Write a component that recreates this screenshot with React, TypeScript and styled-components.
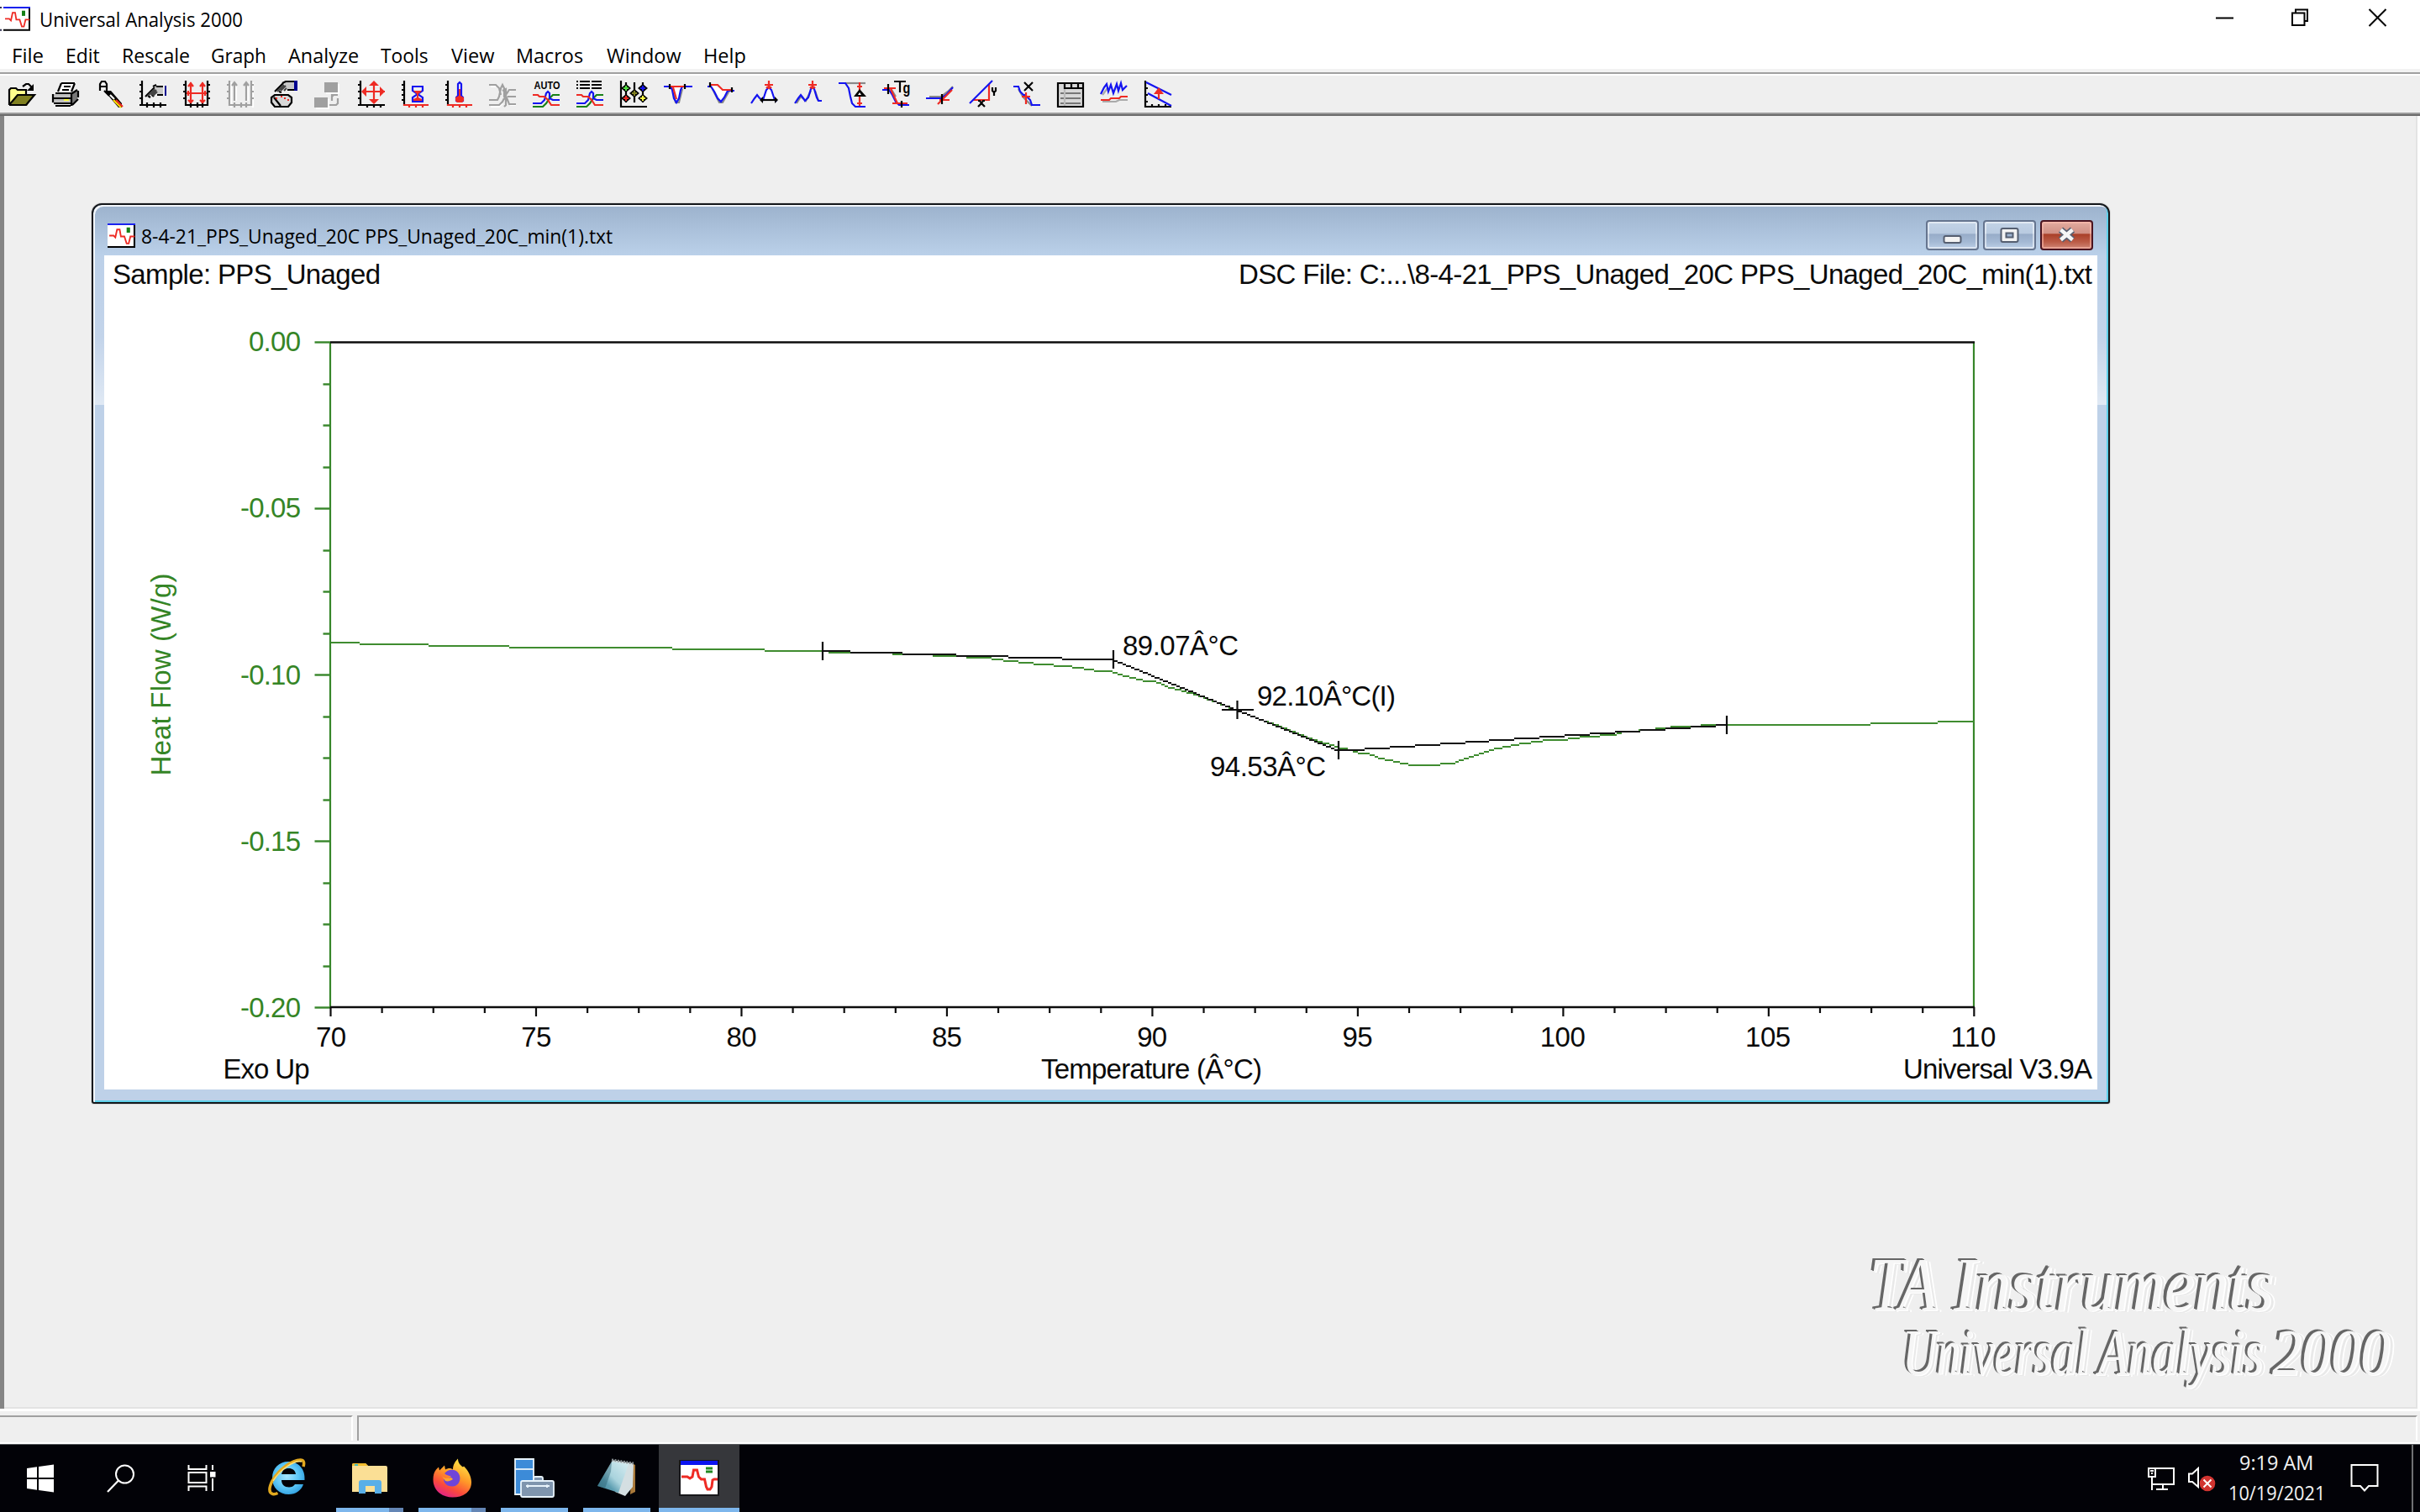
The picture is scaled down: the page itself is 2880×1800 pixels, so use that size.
import React, { useLayoutEffect, useRef, useState } from 'react';
import styled, { createGlobalStyle } from 'styled-components';

const GlobalStyle = createGlobalStyle`
  * { box-sizing: border-box; }
  html, body { margin: 0; padding: 0; background: #efefef; overflow: hidden; }
`;

const UI_FONT = `'Open Sans', 'Noto Sans', sans-serif`;
const PLOT_FONT = `'Liberation Sans', Arial, sans-serif`;

/* ---------- text that keeps a fixed advance width ---------- */

const FitBox = styled.span<{ $w: number }>`
  display: inline-block;
  width: ${p => p.$w}px;
  white-space: pre;
  text-align: left;
`;
const FitInner = styled.span`
  display: inline-block;
  transform-origin: 0 50%;
`;
function FitText({ w, children }: { w: number; children: string }) {
  const ref = useRef<HTMLSpanElement>(null);
  const [scale, setScale] = useState(1);
  useLayoutEffect(() => {
    if (ref.current) setScale(w / ref.current.offsetWidth);
  }, [w, children]);
  return (
    <FitBox $w={w}>
      <FitInner ref={ref} style={{ transform: `scaleX(${scale})` }}>{children}</FitInner>
    </FitBox>
  );
}

/* ---------- frame ---------- */

const Screen = styled.div`
  width: 2880px;
  height: 1800px;
  display: flex;
  flex-direction: column;
  background: #efefef;
  font-family: ${UI_FONT};
  font-size: 24px;
  color: #000;
`;
const TitleBar = styled.header`
  height: 50px;
  flex: none;
  display: flex;
  align-items: flex-start;
  background: #fff;
`;
const AppGlyph = styled.svg`
  width: 36px;
  height: 30px;
  margin-top: 8px;
  display: block;
`;
const AppTitle = styled.div`
  margin: 6px 0 0 11px;
  line-height: 34px;
  flex: 1;
`;
const Controls = styled.div`
  display: flex;
  padding: 10px 40px 0 0;
  gap: 70px;
  svg { display: block; width: 22px; height: 22px; overflow: visible; }
`;
const MenuBar = styled.nav`
  height: 32px;
  flex: none;
  display: flex;
  align-items: flex-start;
  background: #fff;
  padding-left: 14px;
`;
const MenuItem = styled.div<{ $slot: number }>`
  width: ${p => p.$slot}px;
  line-height: 34px;
  margin-top: -1px;
  flex: none;
`;
const ToolBar = styled.div`
  height: 56px;
  flex: none;
  display: flex;
  align-items: flex-start;
  gap: 20px;
  padding: 10px 0 0 10px;
  border-top: 4px solid #f2f2f2;
  box-shadow: inset 0 2px #a0a0a0, inset 0 4px #fff, inset 0 -2px #6b6b6b, inset 0 -4px #9c9c9c;
`;
const ToolIcon = styled.svg`
  width: 32px;
  height: 32px;
  display: block;
  flex: none;
`;

const Workspace = styled.main`
  position: relative;
  height: 1539px;
  flex: none;
  border-left: 5px solid #858585;
  border-right: 3px solid #fff;
  box-shadow: inset -2px 0 #e3e3e3, inset 0 -2px #e3e3e3;
`;
const StatusBar = styled.footer`
  height: 42px;
  flex: none;
  display: flex;
  gap: 5px;
  padding: 8px 3px 2px 0;
  border-top: 3px solid #fff;
  border-bottom: 2px solid #fff;
  background: #f0f0f0;
`;
const StatusCell = styled.div<{ $w?: number; $left?: boolean }>`
  ${p => (p.$w ? `width: ${p.$w}px; flex: none;` : 'flex: 1;')}
  margin-top: -3px;
  border-top: 2px solid #a0a0a0;
  border-left: ${p => (p.$left ? '2px solid #a0a0a0' : '0')};
  border-right: 2px solid #fff;
  background: #efefef;
`;

/* ---------- document window ---------- */

const DocWindow = styled.section`
  position: absolute;
  left: 104px;
  top: 104px;
  width: 2402px;
  height: 1072px;
  border: 2px solid #14171b;
  border-radius: 12px 12px 3px 3px;
  background:
    linear-gradient(#9cb2cd, #bad0e9) 0 0 / 100% 60px no-repeat,
    linear-gradient(#bcd0e8, #c3d4ea 55%, #e0e9f4) 0 60px / 100% 178px no-repeat,
    #bed1e8;
  box-shadow: inset 2px 2px #f2f6fb, inset -2px -2px #5fd0ea, 0 0 0 1px #d8d8d8;
  display: flex;
  flex-direction: column;
`;
const DocTitle = styled.div`
  height: 60px;
  flex: none;
  display: flex;
  align-items: flex-start;
  padding: 18px 18px 0 17px;
`;
const DocGlyph = styled.svg`
  width: 33px;
  height: 29px;
  margin-top: 4px;
  display: block;
`;
const DocName = styled.div`
  margin: 2px 0 0 7px;
  line-height: 34px;
  flex: 1;
`;
const DocButtons = styled.div`
  display: flex;
  gap: 5px;
`;
const DocButton = styled.button<{ $close?: boolean }>`
  width: 63px;
  height: 36px;
  padding: 0;
  display: flex;
  align-items: center;
  justify-content: center;
  border: 2px solid ${p => (p.$close ? '#4a1420' : '#66758f')};
  border-radius: 4px;
  box-shadow: inset 0 0 0 2px ${p => (p.$close ? 'rgba(255,190,175,.55)' : 'rgba(255,255,255,.5)')};
  background: ${p =>
    p.$close
      ? 'linear-gradient(#e2aca1, #d08f83 44%, #a93f28 46%, #bb5c47 75%, #cf8677)'
      : 'linear-gradient(#c3d3e6, #b8cae0 44%, #97acc8 46%, #a4b9d4 75%, #bccfe6)'};
  svg { display: block; }
`;
const DocBody = styled.div`
  margin-left: 13px;
  width: 2372px;
  height: 993px;
  background: #fff;
  svg { display: block; }
`;
const Watermark = styled.div`
  position: absolute;
  right: 33px;
  bottom: 26px;
  display: flex;
  flex-direction: column;
  font-family: 'Liberation Serif', 'Times New Roman', serif;
  font-style: italic;
  color: #f6f6f6;
  text-shadow: -2px -1px #666, -4px -2px #666, 2px 1px #fff, 5px 2px #e9e9e9, 7px 2px #fff;
`;
const CarvedLine = styled.div<{ $size: number; $indent: number; $gap: number }>`
  display: flex;
  gap: ${p => p.$gap}px;
  margin-left: ${p => p.$indent}px;
  height: 81px;
  line-height: 80px;
  font-size: ${p => p.$size}px;
`;

/* ---------- taskbar ---------- */

const TaskBar = styled.div`
  height: 81px;
  flex: none;
  display: flex;
  background: #020207;
  border-top: 1px solid #55585c;
`;
const SystemSlot = styled.div`
  width: 96px;
  display: flex;
  align-items: center;
  justify-content: center;
  svg { display: block; }
`;
const Pins = styled.div`
  display: flex;
  margin-left: 5px;
  flex: 1;
`;
const Pin = styled.div<{ $active?: boolean }>`
  width: ${p => (p.$active ? 96 : 98)}px;
  margin-left: ${p => (p.$active ? 1 : 0)}px;
  display: flex;
  flex-direction: column;
  align-items: center;
  background: ${p => (p.$active ? '#36373b' : 'transparent')};
  svg { display: block; margin-top: 12px; }
`;
const Running = styled.div<{ $w: number; $stack?: boolean }>`
  margin-top: auto;
  width: ${p => p.$w}px;
  height: 5px;
  background: ${p => (p.$stack ? 'linear-gradient(90deg, #7db6ec 0 63px, #6486b5 63px)' : '#7db6ec')};
`;
const Tray = styled.div`
  display: flex;
  color: #f2f2f2;
  align-items: flex-start;
  svg { display: block; }
`;
const TrayGlyph = styled.div<{ $top: number; $gap: number }>`
  margin: ${p => p.$top}px ${p => p.$gap}px 0 0;
`;
const Clock = styled.div`
  width: 116px;
  display: flex;
  flex-direction: column;
  align-items: center;
  line-height: 36px;
  margin: 3px 30px 0 0;
`;
const ShowDesktop = styled.div`
  width: 10px;
  height: 80px;
  border-left: 2px solid #6f7073;
`;

/* ---------- toolbar artwork: [mode, colour, path] on a 16-unit grid ---------- */

type Stroke = ['s' | 'f', string, string];
const K = '#000', B = '#1414f0', R = '#ee2b24', G = '#a0a0a0', GR = '#178017', SH = '#8a8a8a';
const AX = 'M1.5 0v15M0 14.5h16M0 2.5h1M0 6.5h1M0 10.5h1';
const SWIRL = (a: string, b: string, c: string): Stroke[] => [
  ['s', c, 'M0 15.5h6l2-2l2-3l2-2h4'],
  ['s', b, 'M0 13.5h5l2-2l1-4l1-1l1 1v3l2 1h4'],
  ['s', a, 'M0 8.5h3l1 1h3l2 2l2 3h5'],
];

const ICONS: Stroke[][] = [
  [
    ['f', '#ffff8c', 'M1 5h4v1h5v3H5l-3 4H1z'], ['f', '#808020', 'M5 9h10l-4 6H1z'],
    ['s', K, 'M0.5 14.5V5.5l1-1h3l1 1h5v3M0.5 14.5h10l5-6h-10l-5 6M8.5 3.5l2-1.5h1.5l2 2'], ['f', K, 'M15 2v4h-4z'],
  ],
  [
    ['f', '#fff', 'M6 1h8l-3 6H3z'], ['f', '#c0c0c0', 'M1 8h10v6H1z'], ['f', '#777', 'M11 8l4-2v5l-4 4z'],
    ['s', K, 'M5.5 1.5h8M5.5 1.5l-2 5M13.5 1.5l-2 5M7 3.5h4M6 5.5h4M2 7.5h10M0.5 8v5M0.5 10.5h11M1 13.5h10M2 15h9M11.5 8v7M12 7.5l3-2M15.5 6v4M12 14.5l3.5-3.5'],
    ['f', '#ffff40', 'M7 11h3v1H7z'],
  ],
  [
    ['s', K, 'M2.5 6V2l1-1.5h2l1 1.5v4M3 3.5h3M5 6l3 3'], ['f', K, 'M5 6l4 0l6.500 7.500v2.500h-2z'],
    ['s', '#fff', 'M8.5 8.5l2.500 2.500'], ['s', '#ffe000', 'M10.500 11.500l4.500 4.500'], ['s', R, 'M12 11.500l4 4'],
  ],
  [
    ['f', '#c8c8c8', 'M9 3h5v5H10z'], ['f', '#000090', 'M15 3h1v6h-1z'],
    ['s', K, AX + 'M4.5 13v3M8.5 13v3M12.5 13v3M8 3.5l2-1M10 3.500h4M3.5 9.5l5.500-5.500M5 9l1.500 1M7 8l1.500 1.500M10.500 8.5h3.500'],
    ['s', '#444', 'M5 9l4-4M7 8.500l3-3M8 9l2.500-2.500'],
  ],
  [
    ['s', K, 'M1.5 0v15M14.5 0v15M1 14.5h14M0 2.5h1M0 6.5h1M0 10.5h1M15 2.5h1M15 6.5h1M15 10.5h1M4.5 13v3M8.5 13v3M11.5 13v3'],
    ['s', R, 'M4.5 1v12M11.5 1v12M2 7.5h12M3 3.5l1.5-2l1.5 2M10 3.5l1.5-2l1.5 2M3 11.5l1.5 1.5l1.5-1.5M10 11.5l1.5 1.5l1.5-1.5M3 6v3M13 6v3'],
  ],
  [
    ['s', '#fff', 'M2.5 1v15M15.5 1v15M5.5 2v10M12.5 2v10'],
    ['s', G, 'M1.5 0v15M14.5 0v15M1 14.5h14M0 2.5h1M0 6.5h1M0 10.5h1M15 2.5h1M15 6.5h1M15 10.5h1M4.5 1v11M11.5 1v11M3 3l1.5-2l1.5 2M10 3l1.5-2l1.5 2M4.5 13v3M8.5 13v3M11.5 13v3'],
  ],
  [
    ['f', '#c8c8c8', 'M8 1h6v4H9z'], ['f', '#000090', 'M14 0h2v6h-2z'], ['f', '#d8d8d8', 'M1 9h11v4l-1 2H3l-2-2z'],
    ['s', K, 'M7 1.5l2-1h5M2.5 6.5l5-5M5 6.500l1.500 .500M10 5.5h4M0.5 10v3l2 2.5h8l2-2.5v-3l-2-1.5h-8zM2 10l4 5'],
    ['s', '#444', 'M4 6.500l4-4M6 6l3-3M8 6l1.500-1.500'],
    ['s', R, 'M3 10.5h1M6 9.5h1M8 10.5h1M10 11.5h1'],
  ],
  [
    ['f', '#fff', 'M7 2h8v6H7zM1 11h8v6H1z'], ['f', G, 'M6 1h8v6H6zM0 10h8v6H0z'],
    ['s', G, 'M9 14.5h4l1-1v-3M10.5 9.5l1-1h2.5M10.5 8v4'],
  ],
  [
    ['s', K, AX + 'M5.5 15v1M9.5 15v1M13.5 15v1'], ['s', R, 'M9.5 1v12M3 6.5h13'],
    ['f', R, 'M9.5 0l3 3h-6zM9.5 14l3-3h-6zM2 6.5l3-3v6zM16 6.5l-3-3v6z'],
  ],
  [
    ['s', K, 'M1.5 0v15M0 2.5h1M0 5.5h1M0 8.5h1M0 11.5h1'], ['s', R, 'M1 14.5h15M4.5 15v1M8.5 15v1M12.5 15v1'],
    ['s', B, 'M6 3.5h7M6.5 4v2l3 2l-3 2v2M12.5 4v2l-3 2l3 2v2M6 12.5h7'], ['f', R, 'M7 6h5l-2 2v2l2 1v1H7v-1l2-1V8z'],
  ],
  [
    ['s', K, 'M1.5 0v15M0 2.5h1M0 5.5h1M0 8.5h1M0 11.5h1'], ['s', R, 'M1 14.5h15M4.5 15v1M8.5 15v1M12.5 15v1'],
    ['s', B, 'M7.5 9V2l1-1l1 1v7l1 1v2l-1 .5h-2l-1-.5v-2z'], ['f', R, 'M8 5h1v4l2 1v2l-1 1H7l-1-1v-2l2-1z'],
  ],
  [
    ['s', '#fff', 'M1 3.5h4l2 2M1 15.5h5l2-2M11 6.5l2-1h3M11 12.5l2 2h3'],
    ['s', G, 'M0 2.5h4l2 2l1 4M0 11.5h5l1-2l1-5l1-2l1 2v5l1 2v3l-1 1M0 14.5h6l2-2l2-4l2-3h4M11 9.5h5M8 6l2-1v4l2 5h4'],
  ],
  [...SWIRL(R, B, GR)],
  [['s', K, 'M0 .5h1M2 .5h6M9 .5h6M0 2.5h1M2 2.5h6M9 2.5h6M0 4.5h1M2 4.5h6M9 4.5h6'], ...SWIRL(R, B, GR)],
  [
    ['s', K, 'M.5 0v16M0 15.5h16M3.5 1v12M8.5 1v12M13.5 1v12'],
    ['f', K, 'M3.5 2l3 2.5l-3 2.5l-3-2.5zM3.5 8l3 2.5l-3 2.5l-3-2.5zM8.5 5l3 2.5l-3 2.5l-3-2.5zM13.5 2l3 2.5l-3 2.5l-3-2.5zM13.5 8l3 2.5l-3 2.5l-3-2.5z'],
    ['f', '#50e040', 'M2 4h3v1H2zM3 3h1v3H3z'], ['f', R, 'M2 10h3v1H2zM3 9h1v3H3z'], ['f', '#808020', 'M7 7h3v1H7zM8 6h1v3H8z'],
    ['f', B, 'M12 4h3v1h-3zM13 3h1v3h-1z'], ['f', '#ffff40', 'M12 10h3v1h-3zM13 9h1v3h-1z'],
  ],
  [
    ['s', SH, 'M5 4l2 9h2l2-8'], ['f', '#fff', 'M5 4h6l-3 9z'], ['s', B, 'M0 3.5h4l1 2l1 5l1.5 2.5l1.5-2.5l1-5l1-2h6'],
    ['s', R, 'M3 3.5h9M5.5 4l2 7'], ['s', K, 'M3.5 2v3M12.5 2v3'],
  ],
  [
    ['f', '#fff', 'M3 3l9 3l-4 6z'], ['s', SH, 'M3 5l4 8h2l4-7'], ['s', B, 'M0 3.5h2l2 3l2 4l2 2l2-2.5l2-4h4'],
    ['s', R, 'M2 2.5h4l3 3h5'], ['s', K, 'M1.5 1v3M14.5 4v3'],
  ],
  [
    ['f', '#fff', 'M9 4h3l3 8H6z'], ['s', B, 'M0 13.5l2-3l1.5-2l1.5 2l2 1l2-6l1.5-1.5l1.5 1.5l2 6l1 1'], ['s', K, 'M6 11.5h9'],
    ['f', K, 'M5 11.5l2-2v4zM16 11.5l-2-2v4z'], ['s', R, 'M10.5 0v5M8 2.5h5M9 4.5l1-1M12 4.5l-1-1'],
  ],
  [
    ['s', SH, 'M1 13.5l2.5-4l3 2.5l3-6M12 6l2 6'], ['s', B, 'M0 13.5l2-3l1.5-2l1.5 2l1 1.5l2-2l1.5-5l1-1l1 1l1.5 5l1 2h2'],
    ['s', R, 'M10.5 0v5M8 2.5h5M9 4.5l1-1M12 4.5l-1-1'],
  ],
  [
    ['s', SH, 'M4 1.5h12'], ['s', B, 'M0 1.5h4l2 3l1 5l1 4l2 2h6'], ['s', R, 'M12.5 1v14M11 3.5h3M11 13.5h3'],
    ['f', K, 'M12.5 5l4 4.5H9z'], ['f', '#fff', 'M12.5 7l1 1.5h-2z'],
  ],
  [
    ['s', SH, 'M1 4.500h4l3 5'], ['s', B, 'M0 5.5h4l2 3l2 4l2 2h6'], ['s', R, 'M1 4.5h7M5 5l4 8.500M6 13.5h9'],
    ['s', K, 'M3.5 2v6M11.5 12v4M7 .5h7M10.500 0v7'],
  ],
  [['s', SH, 'M2 9.5h7l4-3l3-3'], ['s', B, 'M0 10.5h9l3-2l4-4.5'], ['s', R, 'M7 14l8.500-8.500M8 11.5h6'], ['s', K, 'M9.5 8v6']],
  [
    ['s', R, 'M2 11.5h10M11.5 2v10'], ['s', B, 'M0 13.5L13.5 0'], ['s', K, 'M5 12h1l1 1.5l-2 2M9 12h-1l-1 1.5l2 2M13.5 4v2l1 1M15.5 4v2l-1 1v2'],
  ],
  [
    ['s', SH, 'M3 5l3 5l5 5'], ['s', B, 'M0 3.5h3l1 3l2 2h1l3 3l1 3h5'], ['s', R, 'M7.5 7v7M5 9.5h5'],
    ['s', K, 'M6.5 1l5 5M11.5 1l-5 5'],
  ],
  [
    ['f', '#d8d8d8', 'M1 1h14v14H1z'], ['s', K, 'M.5 1v15M15.5 1v15M0 1.5h16M0 15.5h16M4 4.5h12M4.5 1v4M8.5 1v4M12.5 1v4'],
    ['s', '#777', 'M2 7.5h12M2 10.5h12M2 13.5h12'], ['s', '#bbb', 'M4.5 5v10'],
  ],
  [
    ['s', '#aaa', 'M1 8.5l3-4M1 12.5h8l2-1h5'],
    ['s', B, 'M0 8l2-4l1.500-2l1 4.500l1.500-4l1.500 5l2-5.500l1 4l1.500-4.500l1 4l2.500-2.500'], ['s', R, 'M0 11.5h5l1-1h5l1-1h4'],
  ],
  [
    ['s', K, 'M.5 0v16M0 15.5h16M1 4.5h1M1 8.5h1M1 12.5h1M4.5 14v1M8.5 14v1M12.5 14v1'],
    ['s', B, 'M1 1l15 7.5M2 7.5l14 7.5'], ['s', R, 'M8.5 5v6'], ['f', R, 'M8.5 4l3 4h-6z'],
  ],
];

const IconText = styled.text`
  font-family: ${PLOT_FONT};
  font-weight: 700;
`;

function Tool({ art, index }: { art: Stroke[]; index: number }) {
  return (
    <ToolIcon viewBox="0 0 16 16" overflow="visible">
      {art.map(([mode, color, d], i) =>
        mode === 's'
          ? <path key={i} d={d} fill="none" stroke={color} strokeWidth={1.1} />
          : <path key={i} d={d} fill={color} />
      )}
      {index === 12 && <IconText x="0.8" y="5" fontSize="6.4" textLength="15.4" lengthAdjust="spacingAndGlyphs">AUTO</IconText>}
      {index === 20 && <IconText x="12.2" y="7.4" fontSize="9" textLength="4.4" lengthAdjust="spacingAndGlyphs">g</IconText>}
    </ToolIcon>
  );
}

function AppMark() {
  return (
    <g>
      <rect x="0" y="0" width="16" height="14" fill="#fff" />
      <path d="M0 .5h16" stroke="#1a22ee" />
      <path d="M0 13.5h16M15.5 1v13" stroke="#000" fill="none" />
      <path d="M1 7h2.5l1 1l1-4.5h1.5l.7 4h2l1.3 4h1.2l1-4h2.5" fill="none" stroke={R} strokeWidth=".9" />
      <rect x="11" y="2.3" width="2" height="3" fill={GR} />
    </g>
  );
}

/* ---------- plot ---------- */

const Ink = styled.text<{ $green?: boolean }>`
  font-family: ${PLOT_FONT};
  font-size: 33px;
  fill: ${p => (p.$green ? '#358526' : '#0a0a0a')};
`;

type Pt = [number, number];
const heatFlow: Pt[] = [
  [394, 764], [460, 766], [560, 768], [650, 770], [800, 771], [880, 772], [938, 774], [1033, 776], [1091, 778],
  [1126, 780], [1173, 782], [1193, 785], [1212, 787], [1229, 789], [1254, 791], [1275, 793], [1302, 797], [1323, 799],
  [1335, 803], [1359, 809], [1376, 811], [1390, 817], [1423, 826], [1472, 845], [1495, 854], [1521, 863], [1535, 869],
  [1558, 878], [1593, 889], [1604, 891], [1615, 895], [1627, 896], [1642, 902], [1654, 904], [1665, 907], [1675, 909],
  [1713, 909], [1730, 907], [1740, 903], [1776, 891], [1807, 885], [1835, 881], [1864, 879], [1887, 876], [1920, 874],
  [1929, 871], [1968, 867], [1987, 865], [2023, 863], [2190, 862], [2260, 860], [2349, 858],
];
const tangent: Pt[] = [[979, 774], [1325, 785], [1472, 845], [1593, 893], [2055, 862]];

/** Rasterises a polyline into 2px cells, the way the plot is painted on screen. */
function stepped(points: Pt[]) {
  let d = '';
  for (let i = 1; i < points.length; i++) {
    const [x0, y0] = points[i - 1];
    const [x1, y1] = points[i];
    for (let x = Math.round(x0 / 2) * 2; x < x1; x += 2) {
      const y = Math.round((y0 + ((y1 - y0) * Math.max(0, x - x0)) / (x1 - x0)) / 2) * 2;
      d += `M${x} ${y}h2v2h-2z`;
    }
  }
  return d;
}

const yLabels: [string, number, number][] = [
  ['0.00', 296, 0], ['-0.05', 286, 1], ['-0.10', 286, 2], ['-0.15', 286, 3], ['-0.20', 286, 4],
];

function Plot() {
  const xs = Array.from({ length: 33 }, (_, i) => i);
  const ys = Array.from({ length: 17 }, (_, i) => i);
  return (
    <svg width="2372" height="993" viewBox="124 304 2372 993">
      <Ink x="134" y="338" textLength="319">Sample: PPS_Unaged</Ink>
      <Ink x="1474" y="338" textLength="1016">DSC File: C:...\8-4-21_PPS_Unaged_20C PPS_Unaged_20C_min(1).txt</Ink>
      <path d="M393 1199V407M2349 1199V407" stroke="#37862a" strokeWidth="2.2" />
      <path d="M393 407.5H2350M393 1199H2350" stroke="#0d0d0d" strokeWidth="2.4" />
      {ys.map(i => (
        <path key={i} d={`M${i % 4 ? 384.5 : 374.5} ${407.5 + Math.round(i * 49.5)}H393`} stroke="#37862a" strokeWidth="2.4" />
      ))}
      {xs.map(i => (
        <path key={i} d={`M${393.5 + i * 61.12} 1199V${i % 4 ? 1206 : 1210}`} stroke="#0d0d0d" strokeWidth="2.2" />
      ))}
      {yLabels.map(([t, x, i]) => (
        <Ink key={t} $green x={x} y={418 + i * 198.3} textLength={358 - x}>{t}</Ink>
      ))}
      {[70, 75, 80, 85, 90, 95, 100, 105, 110].map((v, i) => (
        <Ink key={v} x={394 + i * 244.3} y={1246} textAnchor="middle" textLength={v < 100 ? 36 : 54}>{String(v)}</Ink>
      ))}
      <Ink x="265.5" y="1283.5" textLength="103">Exo Up</Ink>
      <Ink x="1239" y="1283.5" textLength="263">Temperature (Â°C)</Ink>
      <Ink x="2265" y="1283.5" textLength="225">Universal V3.9A</Ink>
      <Ink $green transform="translate(203 923.5) rotate(-90)" textLength="241">Heat Flow (W/g)</Ink>
      <path d={stepped(heatFlow)} fill="#3f8c30" />
      <path d={stepped(tangent)} fill="#111" />
      <path
        d="M979 764V786M1325 774V796M1472.500 834V856M1454 845H1492M1593 882V904M2055 852V874"
        stroke="#0d0d0d" strokeWidth="2.2"
      />
      <Ink x="1336" y="780" textLength="138">89.07Â°C</Ink>
      <Ink x="1496" y="840" textLength="165">92.10Â°C(I)</Ink>
      <Ink x="1440" y="924" textLength="138">94.53Â°C</Ink>
    </svg>
  );
}

const menus: [string, number, number][] = [
  ['File', 64, 38], ['Edit', 67, 41], ['Rescale', 106, 81], ['Graph', 92, 66], ['Analyze', 110, 84],
  ['Tools', 84, 57], ['View', 77, 51], ['Macros', 108, 80], ['Window', 115, 89], ['Help', 60, 51],
];

export default function App() {
  return (
    <>
      <GlobalStyle />
      <Screen>
        <TitleBar>
          <AppGlyph viewBox="-2 0 18 14.6" preserveAspectRatio="none">
            <AppMark />
            <path d="M-2 .5h1M-2 13.5h1" stroke="#335" />
          </AppGlyph>
          <AppTitle><FitText w={242}>Universal Analysis 2000</FitText></AppTitle>
          <Controls>
            <svg viewBox="0 0 22 22"><path d="M3 11.500h21" stroke="#000" strokeWidth="2" /></svg>
            <svg viewBox="0 0 22 22"><path d="M2 5.500h14.500v14.500H2zM6 5V1.500h14V15h-3.500" fill="none" stroke="#000" strokeWidth="2" /></svg>
            <svg viewBox="0 0 22 22"><path d="M1.500 1l20 20M21.500 1l-20 20" stroke="#000" strokeWidth="2" /></svg>
          </Controls>
        </TitleBar>
        <MenuBar>
          {menus.map(([name, slot, w]) => (
            <MenuItem key={name} $slot={slot}><FitText w={w}>{name}</FitText></MenuItem>
          ))}
        </MenuBar>
        <ToolBar>
          {ICONS.map((art, i) => <Tool key={i} art={art} index={i} />)}
        </ToolBar>

        <Workspace>
          <DocWindow>
            <DocTitle>
              <DocGlyph viewBox="0 0 16 14" preserveAspectRatio="none"><AppMark /></DocGlyph>
              <DocName><FitText w={561}>8-4-21_PPS_Unaged_20C PPS_Unaged_20C_min(1).txt</FitText></DocName>
              <DocButtons>
                <DocButton>
                  <svg width="24" height="24"><rect x="1.500" y="13" width="20" height="8" rx="2" fill="#f3f3f3" stroke="#555e70" strokeWidth="2" /></svg>
                </DocButton>
                <DocButton>
                  <svg width="24" height="24">
                    <rect x="1.500" y="4" width="20" height="16" rx="2" fill="#f3f3f3" stroke="#555e70" strokeWidth="2" />
                    <rect x="7.500" y="9.500" width="8" height="5" fill="#9fb4d0" stroke="#555e70" strokeWidth="2" />
                  </svg>
                </DocButton>
                <DocButton $close>
                  <svg width="24" height="24">
                    <path d="M4.500 5.500l14 12M18.500 5.500l-14 12" stroke="#5a5f70" strokeWidth="8" />
                    <path d="M4.500 5.500l14 12M18.500 5.500l-14 12" stroke="#f5f5f5" strokeWidth="4.500" />
                  </svg>
                </DocButton>
              </DocButtons>
            </DocTitle>
            <DocBody><Plot /></DocBody>
          </DocWindow>
          <Watermark>
            <CarvedLine $size={92} $indent={0} $gap={20}>
              <FitText w={80}>TA</FitText>
              <FitText w={380}>Instruments</FitText>
            </CarvedLine>
            <CarvedLine $size={78} $indent={39} $gap={11}>
              <FitText w={222}>Universal</FitText>
              <FitText w={196}>Analysis</FitText>
              <FitText w={140}>2000</FitText>
            </CarvedLine>
          </Watermark>
        </Workspace>

        <StatusBar>
          <StatusCell $w={420} />
          <StatusCell $left />
        </StatusBar>

        <TaskBar>
          <SystemSlot>
            <svg width="34" height="34" viewBox="0 0 34 34"><path d="M1 5l12-1.700V16H1zM15 3l18-2.500V16H15zM1 18h12v12.700L1 29zM15 18h18v15.500L15 31z" fill="#fff" /></svg>
          </SystemSlot>
          <SystemSlot>
            <svg width="34" height="34" viewBox="0 0 34 34"><circle cx="21.500" cy="12" r="10.500" fill="none" stroke="#fff" strokeWidth="2" /><path d="M14 19.500L1 33" stroke="#fff" strokeWidth="2.200" /></svg>
          </SystemSlot>
          <SystemSlot>
            <svg width="34" height="34" viewBox="0 0 34 34" fill="none" stroke="#fff" strokeWidth="2"><path d="M1.500 1v5h21V1M1.500 10h21v12h-21zM1.500 32v-5.500h21V32M30 1v6M30 17v15" /><rect x="27" y="9" width="6.500" height="6.500" fill="#fff" stroke="none" /></svg>
          </SystemSlot>
          <Pins>
            <Pin>
              <svg width="48" height="52" viewBox="0 0 48 52">
                <defs><radialGradient id="ie" cx=".45" cy=".45" r=".6"><stop offset="0" stopColor="#a5e6ff" /><stop offset=".6" stopColor="#5cc6f6" /><stop offset="1" stopColor="#2f9fe0" /></radialGradient></defs>
                <path d="M25 8C14 8 6 16 6 27.500S14 47 25.500 47c8.500 0 15-4.500 17.500-12H33c-1.500 2.500-4 3.500-7 3.500c-5.500 0-9-3.500-9-8.500h27.500C45.500 17 37.500 8 25 8zM17 23c1-4.500 4-7 8.500-7s8 2.500 8.500 7z" fill="url(#ie)" />
                <path d="M43 14c1.500-5 .5-8-3.500-8C30 6 14 17 6 31c-4 8-4.500 14 .5 15.500c2 .5 4 0 6-1" fill="none" stroke="#e2a91f" strokeWidth="3.500" />
                <path d="M41 8C32 6 16 17 7 31" fill="none" stroke="#ffe27a" strokeWidth="1.500" />
              </svg>
            </Pin>
            <Pin>
              <svg width="44" height="52" viewBox="0 0 44 52">
                <path d="M1 12q0-2 2-2h14l3 3h21q2 0 2 2v29H1z" fill="#fbdf95" /><path d="M1 12q0-2 2-2h14l3 3H1z" fill="#f4bd2e" /><path d="M4 12h4" stroke="#4bb" strokeWidth="2" />
                <path d="M9 46V33q0-3 3-3h21q3 0 3 3v13h-8V37H17v9z" fill="#59afe8" />
              </svg>
              <Running $w={80} $stack />
            </Pin>
            <Pin>
              <svg width="48" height="52" viewBox="0 0 48 52">
                <defs>
                  <linearGradient id="fox" x1=".8" y1="0" x2=".3" y2="1"><stop offset="0" stopColor="#fff04a" /><stop offset=".45" stopColor="#ff9a28" /><stop offset=".75" stopColor="#fb4a3c" /><stop offset="1" stopColor="#e0218a" /></linearGradient>
                </defs>
                <path d="M5 17l3-3l1 4l6-6l1 5c3-2 7-2 9 0C25 11 28 7 31 4c0 5 3 8 6 10l1-1c5 5 9 12 9 19c0 12-10 18-22.500 18S1.500 42 1.500 29c0-5 1-9 3.500-12z" fill="url(#fox)" transform="translate(0 .5)" />
                <path d="M15 22c4-5 12-6 16-1c5 6 2 16-6 16.500c-7 .5-11-4-11-9c3 1 6 0 9-3c-3-1-6-1-8-3.500z" fill="#6f45d8" />
                <path d="M11 24c3 5 8 4 12 3l2 2c-3 2-6 3-9 2" fill="#ffa52c" />
              </svg>
              <Running $w={80} $stack />
            </Pin>
            <Pin>
              <svg width="50" height="52" viewBox="0 0 50 52">
                <path d="M2 5h22v42H2z" fill="#3c8bd8" stroke="#e8f3fb" strokeWidth="1.800" /><path d="M2 17h22" stroke="#e8f3fb" strokeWidth="1.800" />
                <rect x="24" y="26" width="11" height="6" rx="2" fill="#7f95ae" stroke="#e8f3fb" strokeWidth="1.800" />
                <rect x="9" y="31" width="39" height="19" rx="2" fill="#7f95ae" stroke="#e8f3fb" strokeWidth="1.800" />
                <path d="M15 37h28M17 35.500v3.500M40 35.500v3.500" stroke="#e8f3fb" strokeWidth="2" />
              </svg>
              <Running $w={80} />
            </Pin>
            <Pin>
              <svg width="48" height="52" viewBox="0 0 48 52">
                <defs><linearGradient id="note" x1="0" y1="1" x2="1" y2="0"><stop offset="0" stopColor="#3f7f92" /><stop offset=".3" stopColor="#5e9fb2" /><stop offset=".5" stopColor="#a9d3dd" /><stop offset="1" stopColor="#d8edf2" /></linearGradient></defs>
                <path d="M42 10l4 2v32l-6 3z" fill="#a9793a" /><path d="M18 6l26 4l-1 28l-9 11l-12-5z" fill="#d4dfe2" />
                <path d="M18 8l20 3L26 45L1 37z" fill="url(#note)" /><path d="M18 8L1 37l9 3l7-20z" fill="#2d6274" opacity=".45" /><path d="M18 6l26 4" stroke="#888f92" strokeWidth="3" strokeDasharray="2 1.500" />
              </svg>
              <Running $w={80} />
            </Pin>
            <Pin $active>
              <svg width="48" height="52" viewBox="0 0 48 52">
                <rect x="1" y="7" width="46" height="41" fill="#fff" stroke="#17171a" strokeWidth="2" /><path d="M2 9.500h44" stroke="#0a14f0" strokeWidth="5" />
                <path d="M3 26h7l3 2l3-2l1.500-8h4l2 8l3 3h4l2 9l1.500 3h3l2-3l1-8l2-1h4" fill="none" stroke="#ee2b24" strokeWidth="3" />
                <path d="M32 16h8M32 20h8" stroke="#228a22" strokeWidth="3" />
              </svg>
              <Running $w={96} />
            </Pin>
          </Pins>
          <Tray>
            <TrayGlyph $top={27} $gap={14}>
              <svg width="34" height="28" fill="none" stroke="#fff" strokeWidth="2"><path d="M10 1h22v19H7M19 20v6M11 26h14M6 12v15M2 1h8v10H2zM4 4h4M5 7h2" /></svg>
            </TrayGlyph>
            <TrayGlyph $top={26} $gap={14}>
              <svg width="34" height="32"><path d="M2 8.500h4L13 2v22l-7-6H2z" fill="none" stroke="#fff" strokeWidth="2" /><circle cx="24" cy="20" r="9.300" fill="#d13430" /><path d="M19.500 15.500l9 9M28.500 15.500l-9 9" stroke="#fff" strokeWidth="2" /></svg>
            </TrayGlyph>
            <Clock>
              <FitText w={88}>9:19 AM</FitText>
              <FitText w={115}>10/19/2021</FitText>
            </Clock>
            <TrayGlyph $top={22} $gap={39}>
              <svg width="34" height="36" viewBox="0 0 34 36"><path d="M1.500 2h31v25H22l-5 5.500l-5-5.500H1.500z" fill="none" stroke="#fff" strokeWidth="2" /></svg>
            </TrayGlyph>
            <ShowDesktop />
          </Tray>
        </TaskBar>
      </Screen>
    </>
  );
}
